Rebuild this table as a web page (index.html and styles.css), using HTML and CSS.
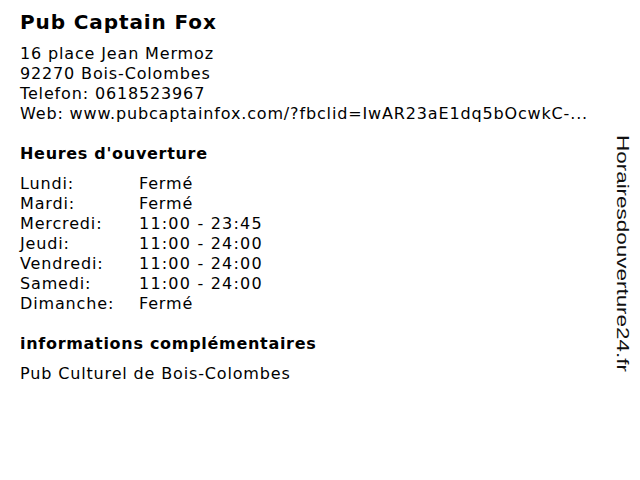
FILE: index.html
```html
<!DOCTYPE html>
<html lang="fr">
<head>
<meta charset="utf-8">
<link rel="stylesheet" href="styles.css">
</head>
<body>
<div class="page">
  <main class="content">
    <h1 class="title">Pub Captain Fox</h1>
    <div class="address">
      <div>16 place Jean Mermoz</div>
      <div>92270 Bois-Colombes</div>
      <div>Telefon: 0618523967</div>
      <div>Web: www.pubcaptainfox.com/?fbclid=IwAR23aE1dq5bOcwkC-...</div>
    </div>
    <h2 class="section-title">Heures d'ouverture</h2>
    <div class="hours">
      <span>Lundi:</span><span>Fermé</span>
      <span>Mardi:</span><span>Fermé</span>
      <span>Mercredi:</span><span class="time">11:00 - 23:45</span>
      <span>Jeudi:</span><span class="time">11:00 - 24:00</span>
      <span>Vendredi:</span><span class="time">11:00 - 24:00</span>
      <span>Samedi:</span><span class="time">11:00 - 24:00</span>
      <span>Dimanche:</span><span>Fermé</span>
    </div>
    <h2 class="section-title">informations complémentaires</h2>
    <p class="info">Pub Culturel de Bois-Colombes</p>
  </main>
  <aside class="brand"><span class="brand-text">Horairesdouverture24.fr</span></aside>
</div>
</body>
</html>
```

FILE: styles.css
```css
html, body {
  margin: 0;
  padding: 0;
  background: #fff;
}
body {
  font-family: "DejaVu Sans", Verdana, sans-serif;
  color: #000;
  font-size: 16px;
  line-height: 20px;
  letter-spacing: 0.85px;
}
.page {
  display: flex;
  width: 640px;
  height: 480px;
}
.content {
  flex: 1;
  padding: 10px 0 0 20px;
}
.title {
  margin: 0 0 10px;
  font-size: 20px;
  line-height: 24px;
  font-weight: bold;
  letter-spacing: 0.9px;
}
.address {
  margin-bottom: 20px;
}
.section-title {
  margin: 0 0 10px;
  font-size: 16px;
  line-height: 20px;
  font-weight: bold;
  letter-spacing: 0.7px;
}
.hours {
  display: grid;
  grid-template-columns: 119px auto;
  margin-bottom: 20px;
}
.time {
  letter-spacing: 1.2px;
}
.info {
  margin: 0;
}
.brand {
  width: 40px;
  padding: 135px 0 0 4px;
  box-sizing: border-box;
  display: flex;
  justify-content: center;
}
.brand-text {
  display: block;
  writing-mode: vertical-rl;
  font-family: "Liberation Sans", Arial, sans-serif;
  font-size: 17px;
  line-height: 20px;
  letter-spacing: 0;
  color: #111;
  transform: scaleY(1.32);
  transform-origin: top center;
  height: max-content;
}
```
